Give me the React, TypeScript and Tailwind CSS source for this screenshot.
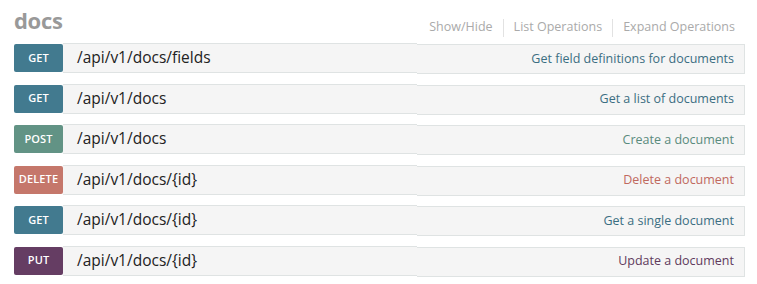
const ops = [
  { method: 'GET', path: '/api/v1/docs/fields', desc: 'Get field definitions for documents', badge: 'bg-[#427a8f]', text: 'text-[#3b6e82]' },
  { method: 'GET', path: '/api/v1/docs', desc: 'Get a list of documents', badge: 'bg-[#427a8f]', text: 'text-[#3b6e82]' },
  { method: 'POST', path: '/api/v1/docs', desc: 'Create a document', badge: 'bg-[#629385]', text: 'text-[#5a8b7d]' },
  { method: 'DELETE', path: '/api/v1/docs/{id}', desc: 'Delete a document', badge: 'bg-[#c5776b]', text: 'text-[#c0695e]' },
  { method: 'GET', path: '/api/v1/docs/{id}', desc: 'Get a single document', badge: 'bg-[#427a8f]', text: 'text-[#3b6e82]' },
  { method: 'PUT', path: '/api/v1/docs/{id}', desc: 'Update a document', badge: 'bg-[#653d63]', text: 'text-[#5f3a5c]' },
]

export default function App() {
  return (
    <div className="w-[757px] h-[284px] bg-white pl-[14px] pr-[12px] font-['Open_Sans','Noto_Sans',sans-serif]">
      <div className="flex items-end justify-between h-[37px]">
        <h2 className="text-[22px] leading-[28px] font-bold text-[#999] tracking-[-0.3px] pb-[3px]">docs</h2>
        <div className="flex items-center text-[12.5px] text-[#aaa] pr-[10px]">
          <span className="pr-[10px]">Show/Hide</span>
          <span className="w-px h-[18px] bg-[#e2e2e2]" />
          <span className="px-[10px]">List Operations</span>
          <span className="w-px h-[18px] bg-[#e2e2e2]" />
          <span className="pl-[10px]">Expand Operations</span>
        </div>
      </div>
      <div className="flex flex-col gap-[9.5px] mt-[6px]">
        {ops.map((op, i) => (
          <div key={i} className="flex items-start h-[31px]">
            <div className="flex items-center h-[30px] py-px">
              <span className={`${op.badge} w-[49px] h-[28px] rounded-[2px] flex items-center justify-center text-white text-[11px] font-semibold tracking-[0.1px]`}>
                {op.method}
              </span>
            </div>
            <div className="w-[354px] h-[30px] bg-[#f5f5f5] border-y border-[#dfe3e3] flex items-center pl-[14px] text-[15.5px] text-[#222]">
              {op.path}
            </div>
            <div className={`flex-1 h-[30px] mt-px bg-[#f5f5f5] border-y border-r border-[#dfe3e3] flex items-center justify-end pr-[10px] text-[12.5px] ${op.text}`}>
              {op.desc}
            </div>
          </div>
        ))}
      </div>
    </div>
  )
}
